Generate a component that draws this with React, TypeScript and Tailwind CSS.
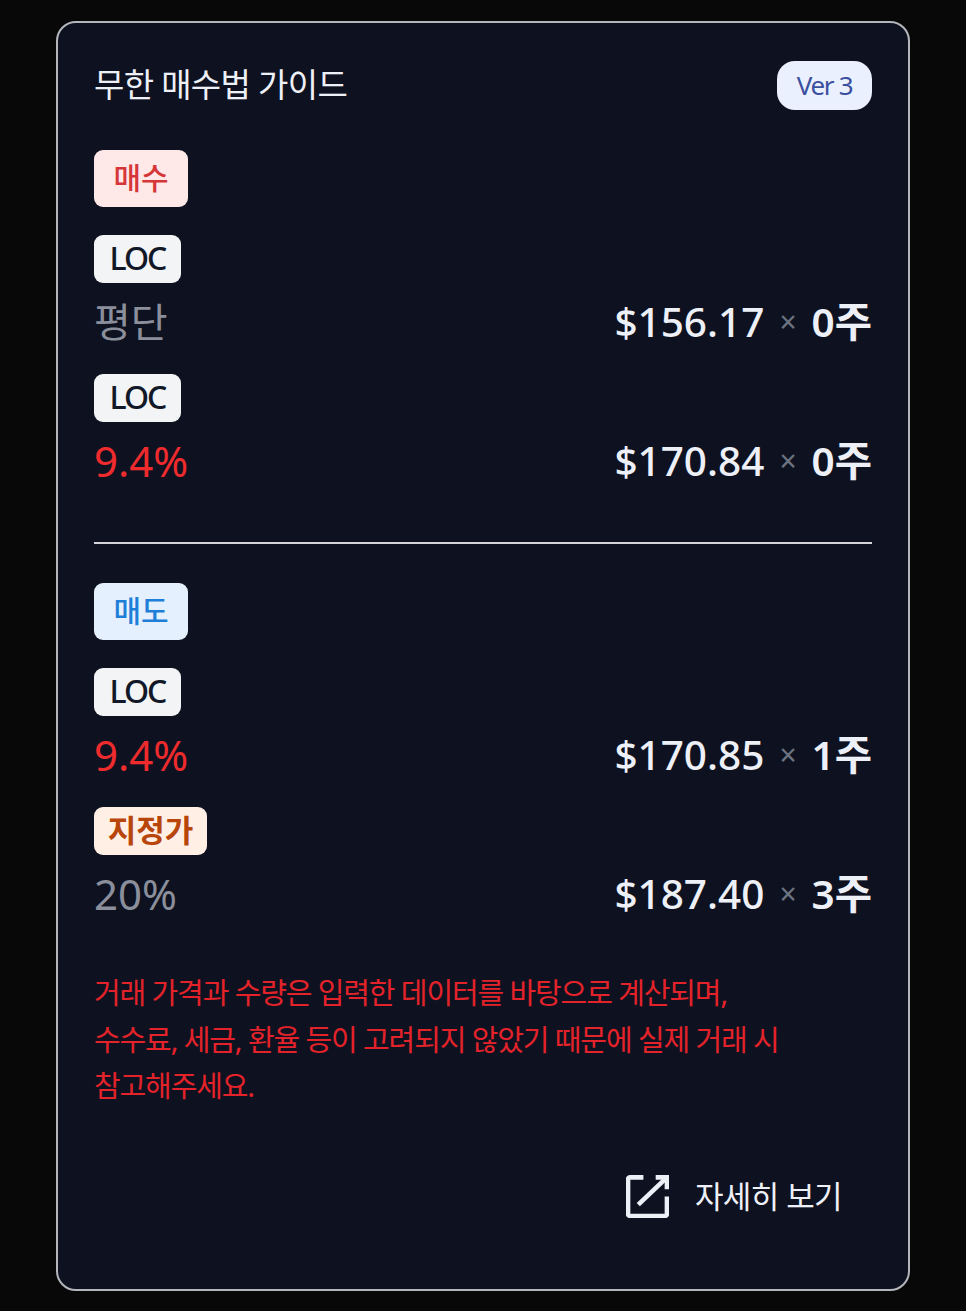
const fontStack = "font-['Noto_Sans','Noto_Sans_CJK_KR',sans-serif]";

function Tag({ label, className }: { label: string; className: string }) {
  return (
    <div className={`inline-flex items-center justify-center rounded-[9px] ${className}`}>
      {label}
    </div>
  );
}

function LocTag() {
  return (
    <Tag
      label="LOC"
      className="h-[48px] w-[87px] bg-[#f3f4f6] pb-[2px] text-[32px] font-medium tracking-[-2px] text-[#111827]"
    />
  );
}

function PriceRow({
  label,
  labelClass,
  price,
  qty,
}: {
  label: string;
  labelClass: string;
  price: string;
  qty: string;
}) {
  return (
    <div className="flex h-[78px] items-center justify-between">
      <span className={`leading-none ${labelClass}`}>{label}</span>
      <div className="flex items-center text-[40.5px] font-medium leading-none text-[#eef0f8]">
        <span>{price}</span>
        <span className="mx-[15px] text-[30px] font-normal text-[#6b7280]">×</span>
        <span className="font-semibold">{qty}</span>
      </div>
    </div>
  );
}

export default function App() {
  return (
    <div className={`min-h-[1311px] bg-[#080808] pl-[56px] pt-[21px] ${fontStack}`}>
      <div className="flex h-[1270px] w-[854px] flex-col rounded-[20px] border-2 border-[#b4b6bc] bg-[#0e1220] px-[36px] pt-[38px]">
        <div className="flex h-[49px] items-center justify-between">
          <h1 className="pb-[2px] text-[33px] font-normal tracking-[-0.7px] text-[#eef0f8]">무한 매수법 가이드</h1>
          <span className="flex h-[49px] w-[95px] items-center justify-center rounded-[18px] bg-[#eaf0fd] text-[26px] tracking-[-1.3px] text-[#3b4f9f]">
            Ver 3
          </span>
        </div>

        <div className="mt-[40px] flex flex-col items-stretch">
          <div>
            <Tag label="매수" className="h-[57px] w-[94px] bg-[#fee8e8] pb-[2px] text-[30px] font-medium text-[#d63638]" />
          </div>
          <div className="mt-[28px]">
            <LocTag />
          </div>
          <PriceRow label="평단" labelClass="text-[40px] text-[#8b8f9c]" price="$156.17" qty="0주" />
          <div className="mt-[13px]">
            <LocTag />
          </div>
          <PriceRow label="9.4%" labelClass="text-[42px] text-[#ef2b2d]" price="$170.84" qty="0주" />
        </div>

        <div className="mt-[42px] h-[2px] bg-[#d4d6dc]" />

        <div className="mt-[39px] flex flex-col">
          <div>
            <Tag label="매도" className="h-[57px] w-[94px] bg-[#e4f0fd] pb-[2px] text-[30px] font-medium text-[#1d7fd8]" />
          </div>
          <div className="mt-[28px]">
            <LocTag />
          </div>
          <PriceRow label="9.4%" labelClass="text-[42px] text-[#ef2b2d]" price="$170.85" qty="1주" />
          <div className="mt-[13px]">
            <Tag
              label="지정가"
              className="h-[48px] w-[113px] bg-[#ffefe5] pb-[2px] text-[31px] font-bold text-[#b8460b]"
            />
          </div>
          <PriceRow label="20%" labelClass="text-[42px] text-[#8b8f9c]" price="$187.40" qty="3주" />
        </div>

        <p className="mt-[37px] text-[29px] leading-[46.5px] tracking-[-1.12px] text-[#e4222a]">
          거래 가격과 수량은 입력한 데이터를 바탕으로 계산되며,
          <br />
          수수료, 세금, 환율 등이 고려되지 않았기 때문에 실제 거래 시
          <br />
          참고해주세요.
        </p>

        <div className="mt-[65px] flex items-center justify-end pr-[30px]">
          <svg viewBox="0 0 42 42" className="h-[43px] w-[43px]" fill="none" stroke="#eef0f8" strokeWidth="4.500">
            <path d="M17 2.300H4a2 2 0 0 0-2 2V38a2 2 0 0 0 2 2H38a2 2 0 0 0 2-2V21" />
            <path d="M29 2.300H40V14" />
            <path d="M40 2.300L12 29" />
          </svg>
          <span className="ml-[26px] text-[31px] leading-none tracking-[-0.6px] text-[#eef0f8]">자세히 보기</span>
        </div>
      </div>
    </div>
  );
}
